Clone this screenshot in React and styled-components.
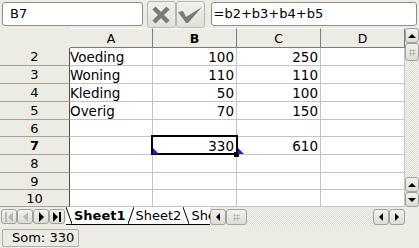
import React from 'react';
import styled, { createGlobalStyle } from 'styled-components';

const GlobalStyle = createGlobalStyle`
  html, body {
    margin: 0;
    padding: 0;
    background: #ecebe4;
  }
  body {
    font-family: "DejaVu Sans", "Liberation Sans", sans-serif;
    color: #000;
  }
`;

const Window = styled.div`
  width: 419px;
  height: 248px;
  display: flex;
  flex-direction: column;
  background: #ecebe4;
  overflow: hidden;
`;

/* ---------- toolbar ---------- */

const Toolbar = styled.div`
  height: 28px;
  box-sizing: border-box;
  display: flex;
  align-items: flex-start;
  padding: 1px 2px 0 2px;
`;

const Field = styled.div`
  box-sizing: border-box;
  width: ${(p) => p.$width}px;
  height: 24px;
  margin-top: 1px;
  margin-left: ${(p) => p.$offset || 0}px;
  background: #fff;
  border: 1px solid #8f8d85;
  border-radius: 3px;
  font-size: 13px;
  line-height: 22px;
  padding-left: ${(p) => p.$pad}px;
  white-space: nowrap;
  overflow: hidden;
`;

const ToolButton = styled.div`
  box-sizing: border-box;
  width: 29px;
  height: 27px;
  margin-left: ${(p) => p.$offset || 0}px;
  display: flex;
  align-items: center;
  justify-content: center;
  background: linear-gradient(#f1f0eb, #e2e0d8);
  border: 1px solid #b9b7ae;
  border-radius: 3px;
`;

/* ---------- sheet ---------- */

const Main = styled.div`
  display: flex;
  height: 179px;
`;

const Sheet = styled.div`
  position: relative;
  width: 405px;
  display: grid;
  grid-template-columns: 70px 83px 84px 84px 84px;
  grid-template-rows: 20px 18px 18px 18px 18px 17px 18px 18px 17px 17px;
  background: #fff;
  font-size: 13.5px;
`;

const Corner = styled.div`
  background: #ecebe4;
  border-right: 1px solid #5a5a5a;
  border-bottom: 1px solid #5a5a5a;
`;

const ColHead = styled.div`
  box-sizing: border-box;
  background: #ecebe4;
  border-right: 1px solid #7c7b76;
  border-bottom: 1px solid #7c7b76;
  border-top: 1px solid #fafaf7;
  display: flex;
  align-items: center;
  justify-content: center;
  font-size: 12.5px;
  font-weight: ${(p) => (p.$active ? 700 : 400)};
`;

const RowHead = styled.div`
  box-sizing: border-box;
  background: #ecebe4;
  border-right: 1px solid #4e4e4c;
  border-bottom: 1px solid #a2a19b;
  display: flex;
  align-items: center;
  justify-content: center;
  font-size: 13px;
  font-weight: ${(p) => (p.$active ? 700 : 400)};
`;

const Cell = styled.div`
  box-sizing: border-box;
  border-right: 1px solid #c4c4c4;
  border-bottom: 1px solid #c4c4c4;
  display: flex;
  align-items: center;
  justify-content: ${(p) => (p.$num ? 'flex-end' : 'flex-start')};
  padding: ${(p) => (p.$num ? '0 2px 0 0' : '0 0 0 0')};
  white-space: nowrap;
  overflow: visible;
`;

const Selection = styled.div`
  position: absolute;
  left: 151px;
  top: 107px;
  width: 87px;
  height: 20px;
  box-sizing: border-box;
  border: 2px solid #000;
  pointer-events: none;
`;

const FillHandle = styled.div`
  position: absolute;
  left: 234px;
  top: 124px;
  width: 5px;
  height: 5px;
  background: #000;
`;

const Marker = styled.svg`
  position: absolute;
  left: ${(p) => p.$x}px;
  top: ${(p) => p.$y}px;
`;

/* ---------- scrollbars ---------- */

const trough = `
  background-color: #ebeae3;
  background-image: repeating-conic-gradient(#f7f6f2 0 25%, #dedcd4 0 50%);
  background-size: 2px 2px;
`;

const VScroll = styled.div`
  width: 14px;
  margin-left: 0;
  display: flex;
  flex-direction: column;
  ${trough}
`;

const Trough = styled.div`
  flex: 1;
`;

const ArrowButton = styled.div`
  box-sizing: border-box;
  width: ${(p) => p.$w || 14}px;
  height: ${(p) => p.$h || 15}px;
  flex: none;
  display: flex;
  align-items: center;
  justify-content: center;
  background: linear-gradient(#f3f2ee, #dddbd3);
  border: 1px solid #a3a19a;
  border-radius: 3px;
  color: ${(p) => (p.$disabled ? '#b9b8b2' : '#000')};
`;

const Grip = styled.div`
  width: 7px;
  height: 7px;
  background-image: radial-gradient(#a9a7a0 45%, transparent 50%);
  background-size: 3px 3px;
`;

/* ---------- tab bar ---------- */

const TabBar = styled.div`
  height: 21px;
  display: flex;
  align-items: flex-start;
  padding: 2px 0 0 1px;
  box-sizing: border-box;
`;

const NavGroup = styled.div`
  display: flex;
  width: 65px;
  flex: none;
`;

const Tabs = styled.div`
  width: 144px;
  height: 17px;
  margin-top: -2px;
  display: flex;
  align-items: center;
  overflow: hidden;
  background: #fff;
  border-bottom: 1px solid #000;
  font-size: 13px;
`;

const Tab = styled.div`
  display: flex;
  align-items: center;
  padding: 0 2px;
  font-weight: ${(p) => (p.$active ? 700 : 400)};
  white-space: nowrap;
`;

const HScroll = styled.div`
  width: 195px;
  height: 16px;
  display: flex;
  ${trough}
`;

/* ---------- status bar ---------- */

const StatusBar = styled.div`
  flex: 1;
  display: flex;
  align-items: flex-start;
  padding: 1px 2px;
`;

const StatusBox = styled.div`
  box-sizing: border-box;
  width: 77px;
  height: 18px;
  border: 1px solid #b0aea6;
  border-radius: 2px;
  font-size: 13px;
  line-height: 16px;
  padding-left: 9px;
`;

const Arrow = ({ dir, size = 5 }) => {
  const pts = {
    up: `0,${size} ${size},0 ${size * 2},${size}`,
    down: `0,0 ${size * 2},0 ${size},${size}`,
    left: `${size},0 ${size},${size * 2} 0,${size}`,
    right: `0,0 0,${size * 2} ${size},${size}`,
  }[dir];
  const vertical = dir === 'up' || dir === 'down';
  return (
    <svg width={vertical ? size * 2 : size} height={vertical ? size : size * 2}>
      <polygon points={pts} fill="currentColor" />
    </svg>
  );
};

const EdgeArrow = ({ dir }) => (
  <svg width="8" height="10">
    {dir === 'first' ? (
      <>
        <rect x="0" y="0" width="2" height="10" fill="currentColor" />
        <polygon points="8,0 8,10 3,5" fill="currentColor" />
      </>
    ) : (
      <>
        <polygon points="0,0 0,10 5,5" fill="currentColor" />
        <rect x="6" y="0" width="2" height="10" fill="currentColor" />
      </>
    )}
  </svg>
);

const Slant = ({ back }) => (
  <svg width="6" height="17" style={{ flex: 'none' }}>
    <line x1={back ? 0 : 6} y1="0" x2={back ? 6 : 0} y2="17" stroke="#000" strokeWidth="1" />
  </svg>
);

const rows = [
  ['2', 'Voeding', '100', '250'],
  ['3', 'Woning', '110', '110'],
  ['4', 'Kleding', '50', '100'],
  ['5', 'Overig', '70', '150'],
  ['6', '', '', ''],
  ['7', '', '330', '610'],
  ['8', '', '', ''],
  ['9', '', '', ''],
  ['10', '', '', ''],
];

export default function App() {
  return (
    <Window>
      <GlobalStyle />
      <Toolbar>
        <Field $width={141} $pad={7}>B7</Field>
        <ToolButton $offset={4}>
          <svg width="20" height="18" viewBox="0 0 20 18">
            <path d="M3 2 L17 16 M17 2 L3 16" stroke="#7b7a76" strokeWidth="4.5" strokeLinecap="butt" />
          </svg>
        </ToolButton>
        <ToolButton>
          <svg width="26" height="18" viewBox="0 0 26 18">
            <polygon points="1,6 6,5 9,11 25,1 11,17 9,17" fill="#7b7a76" />
          </svg>
        </ToolButton>
        <Field $width={207} $offset={6} $pad={2}>=b2+b3+b4+b5</Field>
      </Toolbar>

      <Main>
        <Sheet>
          <Corner style={{ border: 'none' }} />
          {['A', 'B', 'C', 'D'].map((c) => (
            <ColHead key={c} $active={c === 'B'}>{c}</ColHead>
          ))}
          {rows.map(([n, a, b, c]) => (
            <React.Fragment key={n}>
              <RowHead $active={n === '7'}>{n}</RowHead>
              <Cell>{a}</Cell>
              <Cell $num>{b}</Cell>
              <Cell $num>{c}</Cell>
              <Cell />
            </React.Fragment>
          ))}
          <Selection />
          <FillHandle />
          <Marker $x={153} $y={120} width="6" height="6">
            <polygon points="0,0 0,6 6,6" fill="#2020e0" />
          </Marker>
          <Marker $x={238} $y={120} width="6" height="6">
            <polygon points="0,0 6,6 0,6" fill="#2020e0" />
          </Marker>
        </Sheet>
        <VScroll>
          <ArrowButton><Arrow dir="up" size={4} /></ArrowButton>
          <ArrowButton $h={18}><Grip /></ArrowButton>
          <Trough />
          <ArrowButton><Arrow dir="up" size={4} /></ArrowButton>
          <ArrowButton><Arrow dir="down" size={4} /></ArrowButton>
        </VScroll>
      </Main>

      <TabBar>
        <NavGroup>
          <ArrowButton $w={16} $disabled><EdgeArrow dir="first" /></ArrowButton>
          <ArrowButton $w={16} $disabled><Arrow dir="left" /></ArrowButton>
          <ArrowButton $w={16}><Arrow dir="right" /></ArrowButton>
          <ArrowButton $w={16}><EdgeArrow dir="last" /></ArrowButton>
        </NavGroup>
        <Tabs>
          <Slant back />
          <Tab $active>Sheet1</Tab>
          <Slant />
          <Tab>Sheet2</Tab>
          <Slant back />
          <Tab>Sheet3</Tab>
        </Tabs>
        <HScroll>
          <ArrowButton $w={16} $h={16}><Arrow dir="left" size={4} /></ArrowButton>
          <ArrowButton $w={21} $h={16}><Grip /></ArrowButton>
          <Trough />
          <ArrowButton $w={16} $h={16}><Arrow dir="left" size={4} /></ArrowButton>
          <ArrowButton $w={16} $h={16}><Arrow dir="right" size={4} /></ArrowButton>
        </HScroll>
      </TabBar>

      <StatusBar>
        <StatusBox>Som: 330</StatusBox>
      </StatusBar>
    </Window>
  );
}
